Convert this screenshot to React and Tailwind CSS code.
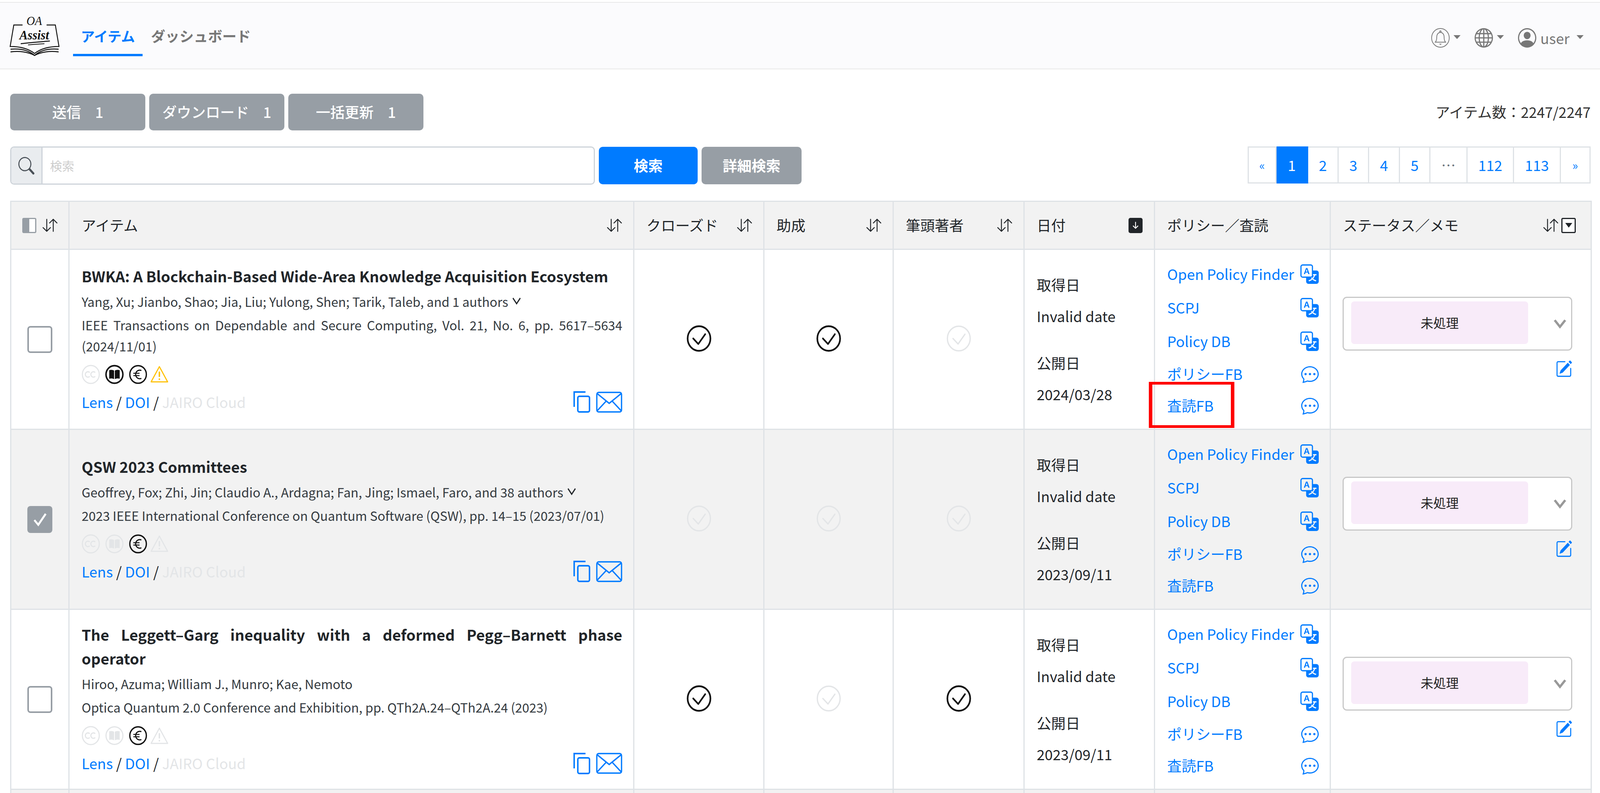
import { BsArrowDownUp, BsChatDots, BsGlobe, BsPersonCircle, BsPencilSquare, BsTranslate, BsSearch } from 'react-icons/bs'

const blue = 'text-[#007bff]'
const cell = 'border-[3px] border-[#dee2e6]'

function Caret() {
  return <span className="block w-0 h-0 border-x-[9px] border-x-transparent border-t-[10px] border-t-[#777]" />
}

function BellIcon() {
  return (
    <svg viewBox="0 0 50 50" preserveAspectRatio="none" className="w-[47px] h-[50px]" fill="none" stroke="#777" strokeWidth="2">
      <ellipse cx="25" cy="25" rx="24" ry="24" />
      <path d="M11 36 h28 c-3-3-4-6-4-13 c0-7-4-12-10-12 s-10 5-10 12 c0 7-1 10-4 13z" />
      <circle cx="25" cy="9" r="2" />
      <path d="M21 40 h8 l-4 3z" fill="#777" stroke="none" />
    </svg>
  )
}

function Logo() {
  return (
    <svg viewBox="0 0 134 104" preserveAspectRatio="none" className="w-[125px] h-[104px] overflow-visible" fill="none" stroke="#111" strokeWidth="2.5">
      <path d="M34 25 H10 L0 80 C25 80 48 84 67 98 C86 84 109 80 134 80 L124 25 H100" />
      <path d="M1 87 C25 85 50 89 67 103 C84 89 109 85 133 87" />
      <path d="M1 94 C25 91 50 94 67 103 C84 94 109 91 133 94" />
      <path d="M29 73 C60 70 85 68 109 66" strokeWidth="2.5" />
      <path d="M49 76 C62 75 75 74 94 73" strokeWidth="2" />
      <text x="66" y="25" textAnchor="middle" fontFamily="Liberation Serif" fontStyle="italic" fontSize="32" fill="#111" stroke="none">OA</text>
      <text x="66" y="62" textAnchor="middle" fontFamily="Liberation Serif" fontStyle="italic" fontWeight="bold" fontSize="34" fill="#111" stroke="none">Assist</text>
    </svg>
  )
}

function CheckCircle({ on }) {
  return (
    <svg viewBox="0 0 68 68" preserveAspectRatio="none" className="w-[63px] h-[68px] mb-[4px]" fill="none" stroke={on ? '#111' : '#e3e5e7'} strokeWidth={on ? 4.5 : 3.5}>
      <circle cx="34" cy="34" r="31.5" />
      <path d="M18 34 L32 48 L51 23" strokeLinecap="round" strokeLinejoin="round" />
    </svg>
  )
}

function CcIcon({ on }) {
  const c = on ? '#111' : '#e3e5e7'
  return (
    <svg viewBox="0 0 50 50" preserveAspectRatio="none" className="w-[47px] h-[50px]" fill="none" stroke={c} strokeWidth="3">
      <circle cx="25" cy="25" r="23" />
      <path d="M22 20 a7 7 0 1 0 0 10 M37 20 a7 7 0 1 0 0 10" strokeWidth="3" />
    </svg>
  )
}

function BookIcon({ on }) {
  const c = on ? '#111' : '#e3e5e7'
  return (
    <svg viewBox="0 0 50 50" preserveAspectRatio="none" className="w-[48px] h-[50px]" fill="none" stroke={c} strokeWidth={on ? 4 : 3}>
      <circle cx="25" cy="25" r="22.5" />
      <path d="M11 14 c4-1 9-1 13 1 v22 c-4-2-9-2-13-1z M39 14 c-4-1-9-1-13 1 v22 c4-2 9-2 13-1z" fill={c} stroke="none" />
    </svg>
  )
}

function EuroIcon() {
  return (
    <svg viewBox="0 0 50 50" preserveAspectRatio="none" className="w-[47px] h-[50px]" fill="none" stroke="#111" strokeWidth="3.5">
      <circle cx="25" cy="25" r="22.5" />
      <path d="M34 15 a11 11 0 1 0 0 20" strokeWidth="3" />
      <path d="M12 22 h17 M12 28 h17" strokeWidth="2.5" />
    </svg>
  )
}

function WarnIcon({ on }) {
  const c = on ? '#ffc107' : '#e3e5e7'
  return (
    <svg viewBox="0 0 50 46" preserveAspectRatio="none" className="w-[46px] h-[45px]" fill="none" stroke={c} strokeWidth="3" strokeLinejoin="round">
      <path d="M25 3 L48 43 H2 Z" />
      <path d="M25 16 v14" strokeWidth="4" />
      <circle cx="25" cy="36" r="2.2" fill={c} stroke="none" />
    </svg>
  )
}

function CopyIcon() {
  return (
    <svg viewBox="0 0 46 55" preserveAspectRatio="none" className="w-[43px] h-[55px]" fill="none" stroke="#007bff" strokeWidth="4">
      <path d="M2 40 V2 H33" />
      <rect x="12" y="13" width="32" height="40" rx="4" />
    </svg>
  )
}

function MailIcon() {
  return (
    <svg viewBox="0 0 72 54" preserveAspectRatio="none" className="w-[67px] h-[54px]" fill="none" stroke="#007bff" strokeWidth="3.5">
      <rect x="2" y="2" width="68" height="50" rx="5" />
      <path d="M3 5 L36 30 L69 5 M3 49 L28 24 M69 49 L44 24" />
    </svg>
  )
}

function Chevron({ className, color, width }) {
  return (
    <svg viewBox="0 0 33 26" preserveAspectRatio="none" className={className} fill="none" stroke={color} strokeWidth={width}>
      <path d="M3 4 L16.5 21 L30 4" />
    </svg>
  )
}

function SortIcon() {
  return <BsArrowDownUp preserveAspectRatio="none" className="w-[38px] h-[38px] text-[#212529]" />
}

function Th({ children, icon }) {
  return (
    <th className={`${cell} pl-[31px] pr-[29px] font-normal text-left`}>
      <div className="flex items-center justify-between">
        <span>{children}</span>
        {icon}
      </div>
    </th>
  )
}

function RowIcons({ cc, book, warn }) {
  return (
    <div className="flex items-center h-[52px] gap-[13px]">
      <CcIcon on={cc} />
      <BookIcon on={book} />
      <EuroIcon />
      <span className="-ml-[5px]"><WarnIcon on={warn} /></span>
    </div>
  )
}

function PolicyLink({ label, chat }) {
  return (
    <div className={`flex items-center justify-between ${chat ? 'h-[81px]' : 'h-[86px]'} ${blue}`}>
      <span>{label}</span>
      {chat
        ? <BsChatDots preserveAspectRatio="none" className="w-[45px] h-[46px]" />
        : <BsTranslate preserveAspectRatio="none" className="w-[47px] h-[50px]" />}
    </div>
  )
}

const rows = [
  {
    title: 'BWKA: A Blockchain-Based Wide-Area Knowledge Acquisition Ecosystem',
    authors: 'Yang, Xu; Jianbo, Shao; Jia, Liu; Yulong, Shen; Tarik, Taleb, and 1 authors',
    more: true,
    source: 'IEEE Transactions on Dependable and Secure Computing, Vol. 21, No. 6, pp. 5617–5634 (2024/11/01)',
    icons: { cc: false, book: true, warn: true },
    checks: [true, true, false],
    published: '2024/03/28',
    highlight: true,
  },
  {
    title: 'QSW 2023 Committees',
    authors: 'Geoffrey, Fox; Zhi, Jin; Claudio A., Ardagna; Fan, Jing; Ismael, Faro, and 38 authors',
    more: true,
    source: '2023 IEEE International Conference on Quantum Software (QSW), pp. 14–15 (2023/07/01)',
    icons: { cc: false, book: false, warn: false },
    checks: [false, false, false],
    published: '2023/09/11',
    selected: true,
  },
  {
    title: 'The Leggett–Garg inequality with a deformed Pegg–Barnett phase operator',
    authors: 'Hiroo, Azuma; William J., Munro; Kae, Nemoto',
    source: 'Optica Quantum 2.0 Conference and Exhibition, pp. QTh2A.24–QTh2A.24 (2023)',
    icons: { cc: false, book: false, warn: false },
    checks: [true, false, true],
    published: '2023/09/11',
  },
]

const pages = [
  { t: '«', w: 'w-[74px]', cls: 'text-[30px]' },
  { t: '1', w: 'w-[81px]', active: true },
  { t: '2', w: 'w-[78px]' },
  { t: '3', w: 'w-[78px]' },
  { t: '4', w: 'w-[79px]' },
  { t: '5', w: 'w-[78px]' },
  { t: '…', w: 'w-[95px]', dim: true },
  { t: '112', w: 'w-[119px]' },
  { t: '113', w: 'w-[120px]' },
  { t: '»', w: 'w-[76px]', cls: 'text-[30px]' },
]

export default function App() {
  return (
    <div className="h-[2031px] w-full overflow-hidden bg-white text-[37px] text-[#212529] font-['Noto_Sans_CJK_JP','Noto_Sans',sans-serif]">
      <div className="h-[7px] bg-white border-b-[2px] border-[#e9e9e9]" />

      {/* Navbar */}
      <nav className="h-[171px] bg-[#fbfbfd] border-b-[3px] border-[#eeeeee] flex items-center justify-between pl-[26px] pr-[42px]">
        <div className="flex items-center">
          <Logo />
          <div className="flex ml-[36px] font-bold">
            <a className="px-[20px] h-[82px] mt-[24px] pt-[5px] text-[35.5px] text-[#007bff] border-b-[6px] border-[#007bff] leading-[50px]">アイテム</a>
            <a className="ml-[21px] h-[82px] mt-[24px] pt-[5px] text-[36.5px] text-[#777] leading-[50px]">ダッシュボード</a>
          </div>
        </div>
        <div className="flex items-center mt-[12px] text-[#777]">
          <BellIcon />
          <span className="ml-[10px] mb-[4px]"><Caret /></span>
          <BsGlobe preserveAspectRatio="none" className="ml-[36px] w-[47px] h-[50px]" />
          <span className="ml-[10px] mb-[4px]"><Caret /></span>
          <BsPersonCircle preserveAspectRatio="none" className="ml-[36px] w-[47px] h-[50px]" />
          <span className="ml-[10px] leading-none">user</span>
          <span className="ml-[18px] mb-[4px]"><Caret /></span>
        </div>
      </nav>

      <main className="pl-[26px] pr-[24px]">
        {/* Action buttons */}
        <div className="flex items-center justify-between mt-[62px] h-[94px]">
          <div className="flex gap-[10px]">
            {['送信', 'ダウンロード', '一括更新'].map(b => (
              <button key={b} className="w-[346px] h-[94px] rounded-[10px] bg-[#979ea5] text-white font-medium flex items-center justify-center gap-[36px]">
                <span>{b}</span><span>1</span>
              </button>
            ))}
          </div>
          <div className="text-[#333]">アイテム数：2247/2247</div>
        </div>

        {/* Search and pagination */}
        <div className="flex items-start justify-between mt-[41px] h-[98px]">
          <div className="flex items-center gap-[10px]">
            <div className="flex w-[1497px] h-[98px] border-[3px] border-[#ced4da] rounded-[10px] overflow-hidden">
              <span className="w-[80px] bg-[#e9ecef] border-r-[3px] border-[#ced4da] flex items-center justify-center">
                <BsSearch preserveAspectRatio="none" className="w-[41px] h-[45px] text-[#495057]" />
              </span>
              <span className="pl-[19px] flex items-center text-[#cccccc] text-[31px]">検索</span>
            </div>
            <button className="w-[253px] h-[96px] rounded-[10px] bg-[#007bff] text-white font-bold">検索</button>
            <button className="w-[256px] h-[96px] rounded-[10px] bg-[#979ea5] text-white font-bold">詳細検索</button>
          </div>
          <div className="flex h-[95px]">
            {pages.map(p => (
              <span
                key={p.t}
                className={`${p.w} ${p.cls || ''} flex items-center justify-center border-y-[3px] border-r-[3px] first:border-l-[3px] ${p.active ? 'bg-[#007bff] border-[#007bff] text-white' : 'border-[#dee2e6]'} ${p.dim ? 'text-[#6c757d]' : p.active ? '' : blue}`}
              >
                {p.t}
              </span>
            ))}
          </div>
        </div>

        {/* Table */}
        <table className="mt-[41px] w-full table-fixed border-collapse">
          <colgroup>
            <col className="w-[149px]" />
            <col className="w-[1446px]" />
            <col className="w-[333px]" />
            <col className="w-[331px]" />
            <col className="w-[335px]" />
            <col className="w-[334px]" />
            <col className="w-[450px]" />
            <col className="w-[668px]" />
          </colgroup>
          <thead>
            <tr className="h-[123px] bg-[#f2f2f2]">
              <th className={`${cell} font-normal`}>
                <div className="flex items-center justify-center gap-[16px]">
                  <span className="w-[36px] h-[39px] rounded-[4px] border-[3px] border-[#979ea5] bg-[linear-gradient(to_right,#979ea5_50%,#ffffff_50%)]" />
                  <SortIcon />
                </div>
              </th>
              <Th icon={<SortIcon />}>アイテム</Th>
              <Th icon={<SortIcon />}>クローズド</Th>
              <Th icon={<SortIcon />}>助成</Th>
              <Th icon={<SortIcon />}>筆頭著者</Th>
              <Th icon={
                <span className="w-[36px] h-[39px] rounded-[5px] bg-[#212529] flex items-center justify-center">
                  <svg viewBox="0 0 20 20" className="w-[22px] h-[26px]" fill="none" stroke="#fff" strokeWidth="2"><path d="M10 2 V17 M4 11 L10 17 L16 11" /></svg>
                </span>
              }>日付</Th>
              <Th>ポリシー／査読</Th>
              <Th icon={
                <span className="flex items-center gap-[8px] mr-[9px]">
                  <SortIcon />
                  <span className="w-[37px] h-[39px] rounded-[4px] border-[3px] border-[#212529] bg-white flex items-center justify-center">
                    <span className="w-0 h-0 border-x-[9px] border-x-transparent border-t-[12px] border-t-[#212529]" />
                  </span>
                </span>
              }>ステータス／メモ</Th>
            </tr>
          </thead>
          <tbody>
            {rows.map(r => (
              <tr key={r.title} className={`h-[461px] ${r.selected ? 'bg-[#f2f2f2]' : 'bg-white'}`}>
                <td className={`${cell} text-center`}>
                  {r.selected ? (
                    <span className="inline-flex w-[64px] h-[69px] rounded-[8px] bg-[#979ea5] items-center justify-center align-middle">
                      <svg viewBox="0 0 64 69" className="w-[64px] h-[69px]" fill="none" stroke="#fff" strokeWidth="5">
                        <path d="M18 36 L28 48 L47 20" />
                      </svg>
                    </span>
                  ) : (
                    <span className="inline-block w-[64px] h-[69px] rounded-[8px] border-[4px] border-[#979ea5] bg-white align-middle" />
                  )}
                </td>

                <td className={`${cell} pl-[31px] pr-[28px] pb-[6px]`}>
                  <div className="font-bold text-[38.2px] leading-[61px] text-justify">{r.title}</div>
                  <div className="text-[32.6px] leading-[61px] text-[#343a40] flex items-center gap-[10px] mt-[4px]">
                    {r.authors}
                    {r.more && <Chevron className="w-[23px] h-[22px]" color="#212529" width="4" />}
                  </div>
                  <div className="text-[32.6px] leading-[54px] text-[#343a40] text-justify mt-[3px]">{r.source}</div>
                  <div className="mt-[20px]"><RowIcons {...r.icons} /></div>
                  <div className="flex items-center justify-between mt-[18px] h-[54px]">
                    <div>
                      <a className={blue}>Lens</a> / <a className={blue}>DOI</a> / <span className="text-[#e3e5e7]">JAIRO Cloud</span>
                    </div>
                    <div className="flex items-center gap-[15px]">
                      <CopyIcon />
                      <MailIcon />
                    </div>
                  </div>
                </td>

                {r.checks.map((c, i) => (
                  <td key={i} className={cell}>
                    <div className="flex justify-center"><CheckCircle on={c} /></div>
                  </td>
                ))}

                <td className={`${cell} pl-[31px] leading-[80px]`}>
                  <div>取得日</div>
                  <div>Invalid date</div>
                  <div className="mt-[40px]">公開日</div>
                  <div>{r.published}</div>
                </td>

                <td className={`${cell} pl-[31px] pr-[28px] relative`}>
                  <PolicyLink label="Open Policy Finder" />
                  <PolicyLink label="SCPJ" />
                  <PolicyLink label="Policy DB" />
                  <PolicyLink label="ポリシーFB" chat />
                  <PolicyLink label="査読FB" chat />
                  {r.highlight && <span className="absolute left-[-16px] bottom-[2px] w-[219px] h-[118px] border-x-[9px] border-y-[7px] border-[#ff0000]" />}
                </td>

                <td className={`${cell} pl-[30px] pr-[47px]`}>
                  <div className="flex items-center h-[138px] border-[3px] border-[#c8c8c8] rounded-[11px] bg-white pl-[19px] pr-[12px]">
                    <div className="w-[453px] h-[109px] mb-[5px] rounded-[8px] bg-[#f8ebf9] flex items-center justify-center text-[32.6px] text-[#222]">未処理</div>
                    <Chevron className="ml-auto w-[33px] h-[26px]" color="#999" width="6" />
                  </div>
                  <div className="flex justify-end mt-[24px] mb-[10px]">
                    <BsPencilSquare preserveAspectRatio="none" className="w-[43px] h-[46px] text-[#007bff]" />
                  </div>
                </td>
              </tr>
            ))}
            <tr className="h-[100px] bg-[#f2f2f2]">
              {[0, 1, 2, 3, 4, 5, 6, 7].map(i => <td key={i} className={cell} />)}
            </tr>
          </tbody>
        </table>
      </main>
    </div>
  )
}
